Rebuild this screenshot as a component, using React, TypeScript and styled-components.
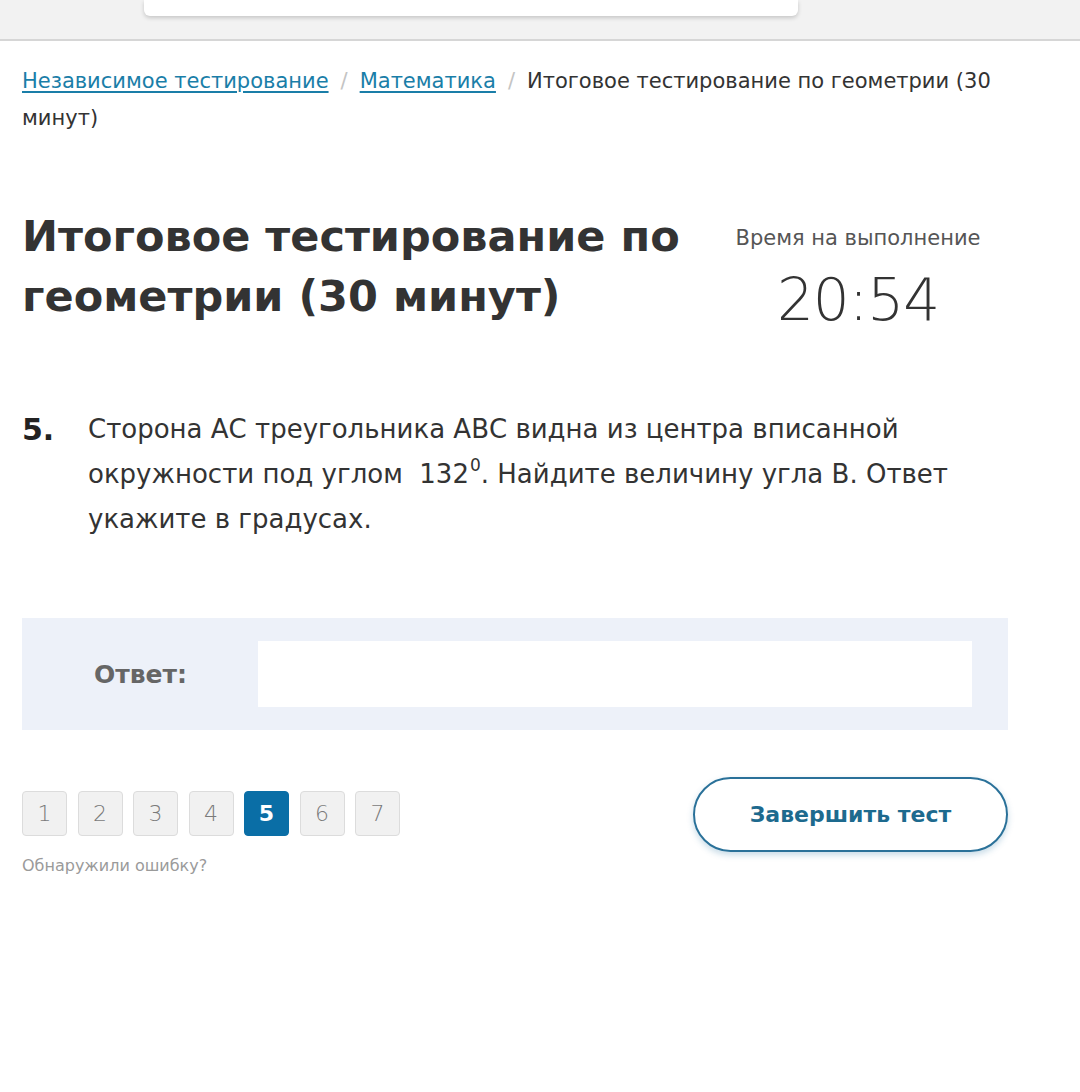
import styled, { createGlobalStyle } from "styled-components";

const GlobalStyle = createGlobalStyle`
body {
    margin: 0;
    background: #ffffff;
    font-family: "DejaVu Sans", "Open Sans", sans-serif;
    color: #333333;
}
`;

const TopBar = styled.div`
height: 41px;
background: #f2f2f2;
border-bottom: 2px solid #d6d6d6;
padding-left: 144px;
box-sizing: border-box;
`;

const TopCard = styled.div`
width: 654px;
height: 16px;
background: #ffffff;
border-radius: 0 0 6px 6px;
box-shadow: 0 2px 4px rgba(0, 0, 0, 0.18);
`;

const Page = styled.main`
padding: 22px 22px 0 22px;
`;

const Crumbs = styled.nav`
display: flex;
flex-wrap: wrap;
align-items: baseline;
font-size: 21px;
line-height: 37px;
color: #333;
padding-right: 60px;
`;

const CrumbLink = styled.a`
color: #1a7ea8;
text-decoration: underline;
text-underline-offset: 3px;
`;

const Sep = styled.span`
color: #c4c4c4;
margin: 0 12px;
`;

const Current = styled.span`
color: #333;
white-space: pre;
`;

const Header = styled.div`
display: flex;
justify-content: space-between;
align-items: flex-start;
margin-top: 69px;
`;

const Title = styled.h1`
margin: 0;
font-size: 43px;
line-height: 60px;
font-weight: 700;
color: #333;
width: 690px;
`;

const Timer = styled.div`
display: flex;
flex-direction: column;
align-items: center;
width: 260px;
margin-right: 70px;
padding-top: 20px;
`;

const TimerLabel = styled.div`
font-size: 21px;
color: #555;
`;

const TimerValue = styled.div`
font-size: 58px;
font-weight: 300;
color: #333;
margin-top: 16px;
letter-spacing: -1px;
`;

const Question = styled.section`
display: flex;
margin-top: 73px;
`;

const QNum = styled.div`
font-size: 30px;
font-weight: 700;
width: 66px;
line-height: 45px;
color: #222;
`;

const QText = styled.p`
margin: 0;
font-size: 26px;
line-height: 45px;
color: #333;
max-width: 880px;
`;

const Degree = styled.sup`
display: inline-block;
font-size: 17px;
line-height: 17px;
vertical-align: 12px;
margin-left: 1px;
`;

const AnswerBox = styled.div`
display: flex;
align-items: center;
background: #edf1f9;
margin-top: 76px;
width: 986px;
height: 112px;
box-sizing: border-box;
padding: 0 36px 0 72px;
`;

const AnswerLabel = styled.label`
font-size: 25px;
font-weight: 700;
color: #666;
width: 164px;
`;

const AnswerInput = styled.input`
flex: 1;
height: 66px;
border: none;
background: #fff;
outline: none;
font-size: 22px;
padding: 0 16px;
`;

const Footer = styled.div`
display: flex;
justify-content: space-between;
align-items: flex-start;
width: 986px;
margin-top: 47px;
`;

const Pager = styled.div`
display: flex;
gap: 10.5px;
margin-top: 14px;
`;

const PageBtn = styled.button<{ $active?: boolean }>`
width: 45px;
height: 45px;
box-sizing: border-box;
border-radius: 4px;
border: 1px solid ${p => (p.$active ? "#0a6ea6" : "#dcdcdc")};
background: ${p => (p.$active ? "#0a6ea6" : "#f1f1f1")};
color: ${p => (p.$active ? "#fff" : "#7a7a7a")};
font-family: inherit;
font-size: 22px;
font-weight: ${p => (p.$active ? 700 : 300)};
padding: 0;
`;

const Report = styled.div`
margin-top: 20px;
font-size: 16px;
color: #9a9a9a;
`;

const FinishBtn = styled.button`
width: 315px;
height: 75px;
border-radius: 38px;
border: 2px solid #2a7199;
background: #fff;
color: #1d6a8e;
font-family: inherit;
font-size: 22px;
font-weight: 700;
box-shadow: 0 3px 6px rgba(30, 110, 160, 0.25);
`;

const pages = [1, 2, 3, 4, 5, 6, 7];

export default function App() {
    return (
        <>
            <GlobalStyle />
            <TopBar>
                <TopCard />
            </TopBar>
            <Page>
                <Crumbs>
                    <CrumbLink href="#">Независимое тестирование</CrumbLink>
                    <Sep>/</Sep>
                    <CrumbLink href="#">Математика</CrumbLink>
                    <Sep>/</Sep>
                    <Current>Итоговое тестирование по геометрии (30 </Current>
                    <Current>минут)</Current>
                </Crumbs>
                <Header>
                    <Title>Итоговое тестирование по геометрии (30 минут)</Title>
                    <Timer>
                        <TimerLabel>Время на выполнение</TimerLabel>
                        <TimerValue>20:54</TimerValue>
                    </Timer>
                </Header>
                <Question>
                    <QNum>5.</QNum>
                    <QText>
                        Сторона АС треугольника АВС видна из центра вписанной окружности под углом&nbsp; 132<Degree>0</Degree>. Найдите величину угла В. Ответ укажите в градусах.
                    </QText>
                </Question>
                <AnswerBox>
                    <AnswerLabel htmlFor="answer">Ответ:</AnswerLabel>
                    <AnswerInput id="answer" type="text" />
                </AnswerBox>
                <Footer>
                    <div>
                        <Pager>
                            {pages.map(n => (
                                <PageBtn key={n} $active={n === 5}>{n}</PageBtn>
                            ))}
                        </Pager>
                        <Report>Обнаружили ошибку?</Report>
                    </div>
                    <FinishBtn>Завершить тест</FinishBtn>
                </Footer>
            </Page>
        </>
    );
}
